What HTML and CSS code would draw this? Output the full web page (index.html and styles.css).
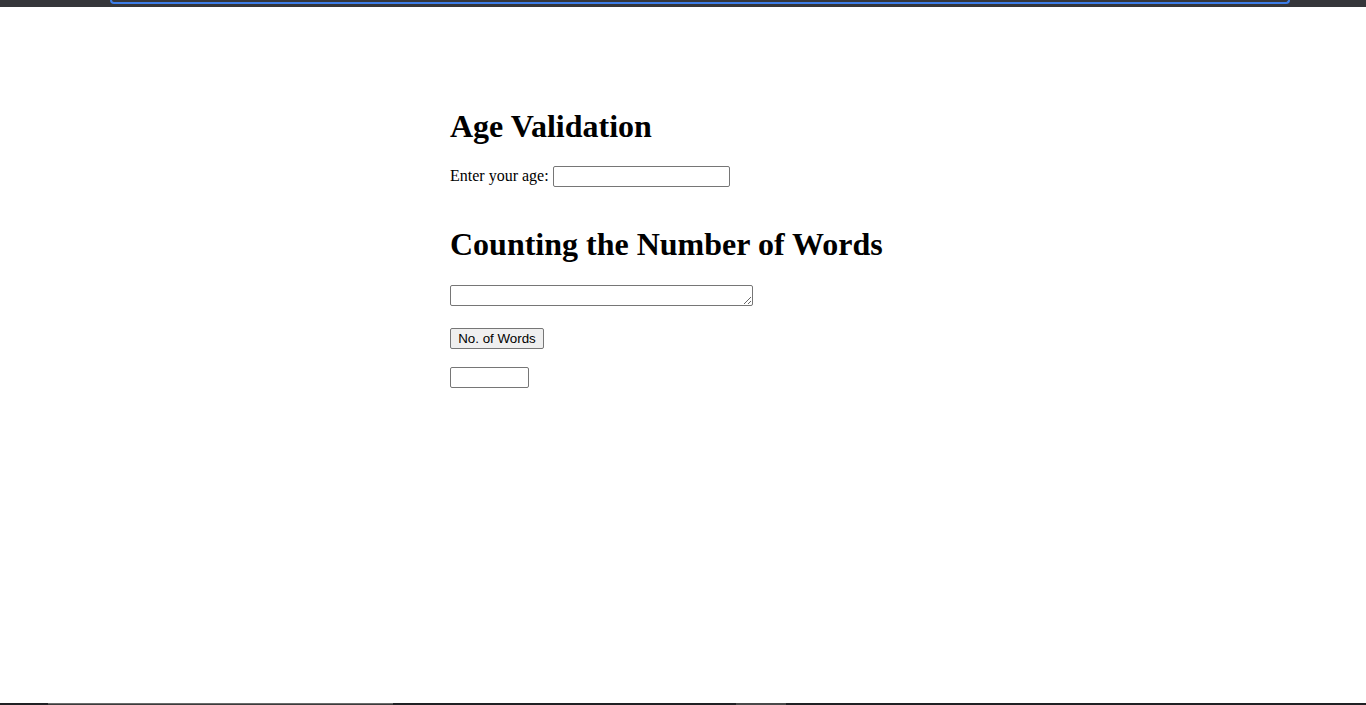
FILE: index.html
```html
<!DOCTYPE html>
<html lang="en">
<head>
<meta charset="utf-8">
<title>Age Validation</title>
<link rel="stylesheet" href="styles.css">
</head>
<body>
<div class="topbar"><div class="tab-outline"></div></div>
<main class="content">
  <h1 class="title">Age Validation</h1>
  <div class="age-row">Enter your age: <input type="text" class="age-input"></div>
  <h1 class="title">Counting the Number of Words</h1>
  <textarea class="words-area"></textarea>
  <button type="button" class="count-btn">No. of Words</button>
  <input type="text" class="count-output">
</main>
<div class="bottombar">
  <div class="seg seg-dark w48"></div>
  <div class="seg seg-light w345"></div>
  <div class="seg seg-dark w343"></div>
  <div class="seg seg-mid w50"></div>
  <div class="seg seg-dark grow"></div>
</div>
</body>
</html>
```

FILE: styles.css
```css
html, body {
  margin: 0;
  padding: 0;
  background: #ffffff;
}
body {
  min-height: 100vh;
  display: flex;
  flex-direction: column;
  font-family: "Liberation Serif", "Times New Roman", serif;
  font-size: 16px;
  color: #000;
}
.topbar {
  height: 7px;
  background: #35363a;
  display: flex;
  padding-left: 110px;
}
.tab-outline {
  width: 1176px;
  height: 2px;
  border: 2px solid #3d7ee8;
  border-top: none;
  border-radius: 0 0 9px 9px;
}
.content {
  flex: 1;
  padding: 79.5px 0 0 450px;
}
.title {
  font-size: 32px;
  font-weight: bold;
  margin: 21.44px 0;
  line-height: normal;
}
.age-row {
  margin-bottom: 39px;
}
.age-input {
  width: 177px;
  height: 21px;
  box-sizing: border-box;
  border: 1px solid #767676;
  border-radius: 2px;
  padding: 1px 2px;
  font: 13.33px "Liberation Sans", Arial, sans-serif;
  vertical-align: baseline;
}
.words-area {
  display: block;
  width: 303px;
  height: 21px;
  box-sizing: border-box;
  margin: 0;
  border: 1px solid #767676;
  border-radius: 2px;
  font: 13.33px "Liberation Mono", monospace;
  padding: 2px;
  resize: both;
}
.count-btn {
  display: block;
  margin-top: 22.5px;
  width: 94px;
  height: 21px;
  box-sizing: border-box;
  padding: 1px 6px;
  font: 13.33px "Liberation Sans", Arial, sans-serif;
  color: #000;
  background: #efefef;
  border: 1px solid #767676;
  border-radius: 2px;
}
.count-output {
  display: block;
  margin-top: 18px;
  width: 79px;
  height: 21px;
  box-sizing: border-box;
  border: 1px solid #767676;
  border-radius: 2px;
  padding: 1px 2px;
  font: 13.33px "Liberation Sans", Arial, sans-serif;
}
.bottombar {
  height: 2px;
  display: flex;
}
.seg { height: 2px; }
.seg-dark { background: #202124; }
.seg-light { background: #3c3c3c; border-top: 1px solid #6a6a6a; box-sizing: border-box; }
.seg-mid { background: #4a4a4a; }
.w48 { width: 48px; }
.w345 { width: 345px; }
.w343 { width: 343px; }
.w50 { width: 50px; }
.grow { flex: 1; }
```
